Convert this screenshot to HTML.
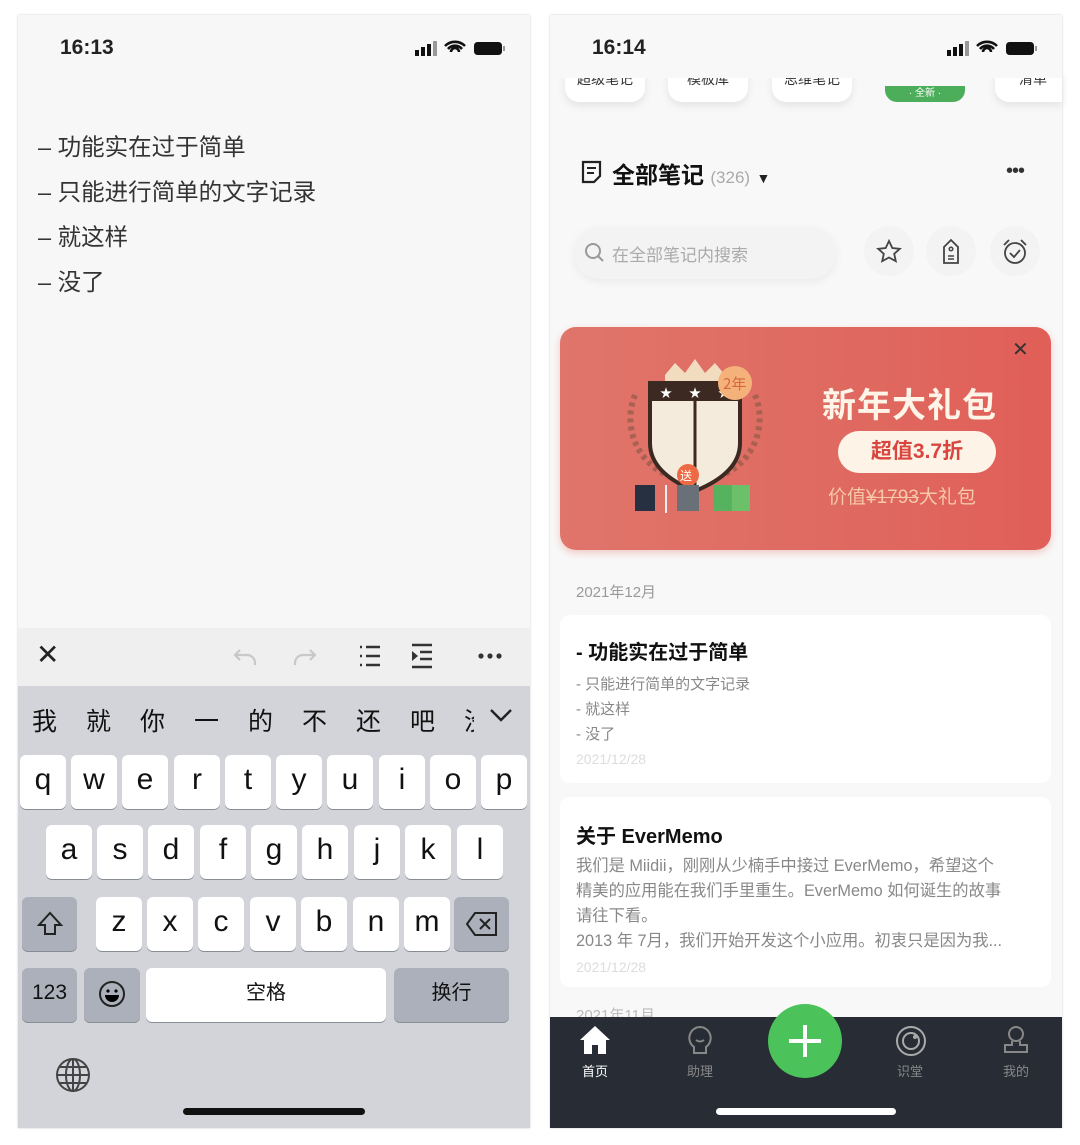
<!DOCTYPE html>
<html><head><meta charset="utf-8"><style>
*{margin:0;padding:0;box-sizing:border-box}
body{width:1080px;height:1145px;background:#fff;position:relative;overflow:hidden;font-family:"Liberation Sans","Noto Sans CJK SC",sans-serif;color:#222}
.a{position:absolute}
.k{position:absolute;background:#fff;border-radius:6px;box-shadow:0 1px 0 #888c93;font-size:30px;text-align:center;color:#111;height:54px;line-height:50px;width:46px}
.g{background:#abb0ba}
</style></head><body>
<!-- LEFT PHONE -->
<div class="a" style="left:18px;top:15px;width:512px;height:1113px;background:#f7f7f7;box-shadow:0 0 2px #ccc"></div>
<div class="a" style="left:60px;top:36px;font-size:21px;font-weight:bold">16:13</div>
<svg class="a" style="left:412px;top:40px" width="96" height="20"><g fill="#111"><rect x="3" y="10" width="4" height="6"/><rect x="9" y="7" width="4" height="9"/><rect x="15" y="4" width="4" height="12"/><rect x="21" y="1" width="4" height="15" fill="#999"/></g><path d="M33 6a14 14 0 0 1 20 0M36 9a9 9 0 0 1 14 0M39 12a4 4 0 0 1 8 0" stroke="#111" stroke-width="2.6" fill="none"/><rect x="62" y="2" width="28" height="13" rx="3.5" fill="#111"/><rect x="91" y="6" width="2" height="5" fill="#999"/></svg>
<div class="a" style="left:38px;top:125px;font-size:23.5px;line-height:45px;color:#333">– 功能实在过于简单<br>– 只能进行简单的文字记录<br>– 就这样<br>– 没了</div>
<div class="a" style="left:18px;top:628px;width:512px;height:58px;background:#efeff0"></div>
<div class="a" style="left:36px;top:638px;font-size:28px;color:#222">✕</div>
<svg class="a" style="left:230px;top:640px" width="290" height="34"><g fill="none" stroke="#c8c8c8" stroke-width="2.2"><path d="M10 10l-5 5 5 5M5 15h12a8 8 0 0 1 8 8v2"/><path d="M80 10l5 5-5 5M85 15H73a8 8 0 0 0-8 8v2"/></g><g stroke="#333" stroke-width="2.4"><path d="M136 7h14M136 16h14M136 25h14"/><path d="M130 7h2M130 16h2M130 25h2"/><path d="M182 5h20M190 12h12M190 19h12M182 27h20"/></g><path d="M182 11l6 5-6 5z" fill="#333"/><g fill="#333"><circle cx="251" cy="16" r="2.6"/><circle cx="260" cy="16" r="2.6"/><circle cx="269" cy="16" r="2.6"/></g></svg>
<div class="a" style="left:18px;top:686px;width:512px;height:442px;background:#d2d4d9"></div>
<div class="a" style="left:32px;top:702px;font-size:25px;color:#111">
<span style="position:absolute;left:0">我</span><span style="position:absolute;left:54px">就</span><span style="position:absolute;left:108px">你</span><span style="position:absolute;left:162px">一</span><span style="position:absolute;left:216px">的</span><span style="position:absolute;left:270px">不</span><span style="position:absolute;left:324px">还</span><span style="position:absolute;left:378px">吧</span><span style="position:absolute;left:432px;width:10px;overflow:hidden">没</span></div>
<svg class="a" style="left:488px;top:706px" width="26" height="18"><path d="M3 4l10 10 10-10" stroke="#222" stroke-width="2.4" fill="none"/></svg>
<div class="k" style="left:20px;top:755px">q</div><div class="k" style="left:71px;top:755px">w</div><div class="k" style="left:122px;top:755px">e</div><div class="k" style="left:174px;top:755px">r</div><div class="k" style="left:225px;top:755px">t</div><div class="k" style="left:276px;top:755px">y</div><div class="k" style="left:327px;top:755px">u</div><div class="k" style="left:379px;top:755px">i</div><div class="k" style="left:430px;top:755px">o</div><div class="k" style="left:481px;top:755px">p</div>
<div class="k" style="left:46px;top:825px">a</div><div class="k" style="left:97px;top:825px">s</div><div class="k" style="left:148px;top:825px">d</div><div class="k" style="left:200px;top:825px">f</div><div class="k" style="left:251px;top:825px">g</div><div class="k" style="left:302px;top:825px">h</div><div class="k" style="left:354px;top:825px">j</div><div class="k" style="left:405px;top:825px">k</div><div class="k" style="left:457px;top:825px">l</div>
<div class="k g" style="left:22px;top:897px;width:55px"><svg width="30" height="30" style="margin-top:12px"><path d="M15 4L4 16h6v9h10v-9h6z" fill="none" stroke="#222" stroke-width="2"/></svg></div>
<div class="k" style="left:96px;top:897px">z</div><div class="k" style="left:147px;top:897px">x</div><div class="k" style="left:198px;top:897px">c</div><div class="k" style="left:250px;top:897px">v</div><div class="k" style="left:301px;top:897px">b</div><div class="k" style="left:353px;top:897px">n</div><div class="k" style="left:404px;top:897px">m</div>
<div class="k g" style="left:454px;top:897px;width:55px"><svg width="34" height="26" style="margin-top:14px"><path d="M10 2h21v22H10L2 13z" fill="none" stroke="#222" stroke-width="2"/><path d="M15 8l10 10M25 8L15 18" stroke="#222" stroke-width="2"/></svg></div>
<div class="k g" style="left:22px;top:968px;width:55px;font-size:21px">123</div>
<div class="k g" style="left:84px;top:968px;width:56px"><svg width="28" height="28" style="margin-top:12px"><circle cx="14" cy="14" r="12" fill="none" stroke="#222" stroke-width="2"/><circle cx="10" cy="11" r="1.6"/><circle cx="18" cy="11" r="1.6"/><path d="M7 15h14a7 7 0 0 1-14 0z"/></svg></div>
<div class="k" style="left:146px;top:968px;width:240px;font-size:20px">空格</div>
<div class="k g" style="left:394px;top:968px;width:115px;font-size:20px">换行</div>
<svg class="a" style="left:54px;top:1056px" width="38" height="38"><g fill="none" stroke="#444" stroke-width="2"><circle cx="19" cy="19" r="16"/><ellipse cx="19" cy="19" rx="7" ry="16"/><path d="M19 3v32M3 19h32M6 11h26M6 27h26"/></g></svg>
<div class="a" style="left:183px;top:1108px;width:182px;height:7px;border-radius:4px;background:#111"></div>

<!-- RIGHT PHONE -->
<div class="a" style="left:550px;top:15px;width:512px;height:1113px;background:#f8f8f8;box-shadow:0 0 2px #ccc"></div>
<div class="a" style="left:565px;top:72px;width:80px;height:30px;background:#fff;border-radius:0 0 14px 14px;box-shadow:0 4px 8px #e4e4e4;font-size:14px;text-align:center;color:#333;line-height:14px;overflow:hidden">超级笔记</div>
<div class="a" style="left:668px;top:72px;width:80px;height:30px;background:#fff;border-radius:0 0 14px 14px;box-shadow:0 4px 8px #e4e4e4;font-size:14px;text-align:center;color:#333;line-height:14px;overflow:hidden">模板库</div>
<div class="a" style="left:772px;top:72px;width:80px;height:30px;background:#fff;border-radius:0 0 14px 14px;box-shadow:0 4px 8px #e4e4e4;font-size:14px;text-align:center;color:#333;line-height:14px;overflow:hidden">思维笔记</div>
<div class="a" style="left:885px;top:86px;width:80px;height:16px;background:#4cae5b;border-radius:0 0 12px 12px;font-size:10px;text-align:center;color:#fff;line-height:16px">· 全新 ·</div>
<div class="a" style="left:995px;top:72px;width:67px;height:30px;background:#fff;border-radius:0 0 0 14px;box-shadow:0 4px 8px #e4e4e4;font-size:14px;color:#333;line-height:14px;padding-left:24px;overflow:hidden">清单</div>
<div class="a" style="left:550px;top:20px;width:512px;height:58px;background:#f8f8f8"></div>
<div class="a" style="left:592px;top:36px;font-size:21px;font-weight:bold">16:14</div>
<svg class="a" style="left:944px;top:40px" width="96" height="20"><g fill="#111"><rect x="3" y="10" width="4" height="6"/><rect x="9" y="7" width="4" height="9"/><rect x="15" y="4" width="4" height="12"/><rect x="21" y="1" width="4" height="15" fill="#999"/></g><path d="M33 6a14 14 0 0 1 20 0M36 9a9 9 0 0 1 14 0M39 12a4 4 0 0 1 8 0" stroke="#111" stroke-width="2.6" fill="none"/><rect x="62" y="2" width="28" height="13" rx="3.5" fill="#111"/><rect x="91" y="6" width="2" height="5" fill="#999"/></svg>
<svg class="a" style="left:580px;top:160px" width="24" height="24"><path d="M3 2h17v14l-6 6H3z" fill="none" stroke="#222" stroke-width="2.2"/><path d="M7 8h9M7 13h7" stroke="#222" stroke-width="2"/></svg>
<div class="a" style="left:612px;top:156px;font-size:23px;font-weight:bold;color:#111">全部笔记 <span style="font-weight:normal;font-size:17px;color:#aaa">(326)</span> <span style="font-size:14px;color:#222">▼</span></div>
<div class="a" style="left:1006px;top:160px;font-size:20px;color:#333;letter-spacing:-1px">•••</div>
<div class="a" style="left:574px;top:227px;width:262px;height:52px;border-radius:26px;background:#f3f3f3;box-shadow:0 3px 8px #eaeaea"></div>
<svg class="a" style="left:584px;top:242px" width="22" height="22"><circle cx="9" cy="9" r="7" fill="none" stroke="#999" stroke-width="2"/><path d="M14 14l5 5" stroke="#999" stroke-width="2"/></svg>
<div class="a" style="left:612px;top:241px;font-size:17px;color:#aaa">在全部笔记内搜索</div>
<div class="a" style="left:864px;top:226px;width:50px;height:50px;border-radius:25px;background:#f3f3f3"></div>
<div class="a" style="left:926px;top:226px;width:50px;height:50px;border-radius:25px;background:#f3f3f3"></div>
<div class="a" style="left:990px;top:226px;width:50px;height:50px;border-radius:25px;background:#f3f3f3"></div>
<svg class="a" style="left:876px;top:239px" width="26" height="26"><path d="M13 2l3.3 7 7.5.8-5.6 5 1.6 7.4L13 18.5 6.2 22.2l1.6-7.4-5.6-5 7.5-.8z" fill="none" stroke="#444" stroke-width="1.8"/></svg>
<svg class="a" style="left:941px;top:238px" width="20" height="28"><path d="M3 9l7-7 7 7v16H3z" fill="none" stroke="#444" stroke-width="1.8"/><circle cx="10" cy="11" r="1.8" fill="none" stroke="#444" stroke-width="1.5"/><path d="M7 18h6M7 21h6" stroke="#444" stroke-width="1.5"/></svg>
<svg class="a" style="left:1002px;top:238px" width="26" height="28"><circle cx="13" cy="15" r="10" fill="none" stroke="#444" stroke-width="1.8"/><path d="M2 7l5-5M24 7l-5-5M8 15l4 4 6-7" fill="none" stroke="#444" stroke-width="1.8"/></svg>
<!-- banner -->
<div class="a" style="left:560px;top:327px;width:491px;height:223px;border-radius:16px;background:linear-gradient(90deg,#e0756b,#df6960 60%,#e05f58);box-shadow:0 3px 8px #f0c8c4"></div>
<div class="a" style="left:1012px;top:337px;font-size:20px;color:#333">✕</div>
<svg class="a" style="left:615px;top:345px" width="160" height="180"><g fill="none" stroke="#9b5d4c" stroke-width="6" stroke-dasharray="4 4" opacity=".8"><path d="M20 50a62 62 0 0 0 50 85M140 50a62 62 0 0 1-50 85"/></g><path d="M50 30l10-12 10 10 10-14 10 14 10-10 10 12v8H50z" fill="#f2dcc0"/><path d="M35 38h90v60q0 30-45 48Q35 128 35 98z" fill="#f4ebdc" stroke="#3c2a22" stroke-width="4"/><rect x="35" y="38" width="90" height="18" fill="#3c2a22"/><g fill="#fff" font-size="12"><text x="45" y="52">★</text><text x="74" y="52">★</text><text x="103" y="52">★</text></g><path d="M80 56v86" stroke="#3c2a22" stroke-width="3"/><circle cx="120" cy="38" r="17" fill="#f4b27a"/><text x="108" y="44" font-size="15" fill="#d6683a" font-family="Noto Sans CJK SC">2年</text><circle cx="73" cy="130" r="11" fill="#ee6a44"/><text x="65" y="135" font-size="12" fill="#fff" font-family="Noto Sans CJK SC">送</text><rect x="20" y="140" width="20" height="26" fill="#273040"/><rect x="50" y="140" width="2" height="28" fill="#eee"/><rect x="62" y="140" width="22" height="26" fill="#6a7078"/><rect x="98" y="140" width="18" height="26" fill="#55b35f"/><rect x="117" y="140" width="18" height="26" fill="#6cc06a"/></svg>
<div class="a" style="left:822px;top:378px;font-size:34px;font-weight:bold;color:#fff4e8;letter-spacing:1px">新年大礼包</div>
<div class="a" style="left:838px;top:431px;width:158px;height:42px;border-radius:21px;background:#fdf3e7;color:#d9463f;font-size:21px;font-weight:bold;text-align:center;line-height:42px">超值3.7折</div>
<div class="a" style="left:828px;top:482px;font-size:19px;color:#f6c8a9">价值<s>¥1793</s>大礼包</div>
<!-- notes -->
<div class="a" style="left:576px;top:581px;font-size:15px;color:#999">2021年12月</div>
<div class="a" style="left:560px;top:615px;width:491px;height:168px;background:#fff;border-radius:10px"></div>
<div class="a" style="left:576px;top:636px;font-size:20px;font-weight:bold;color:#111">- 功能实在过于简单</div>
<div class="a" style="left:576px;top:672px;font-size:15px;line-height:25px;color:#888">- 只能进行简单的文字记录<br>- 就这样<br>- 没了</div>
<div class="a" style="left:576px;top:751px;font-size:14px;color:#ddd">2021/12/28</div>
<div class="a" style="left:560px;top:797px;width:491px;height:190px;background:#fff;border-radius:10px"></div>
<div class="a" style="left:576px;top:820px;font-size:20px;font-weight:bold;color:#111">关于 EverMemo</div>
<div class="a" style="left:576px;top:854px;font-size:16.3px;line-height:25px;color:#888;white-space:nowrap">我们是 Miidii，刚刚从少楠手中接过 EverMemo，希望这个<br>精美的应用能在我们手里重生。EverMemo 如何诞生的故事<br>请往下看。<br>2013 年 7月，我们开始开发这个小应用。初衷只是因为我...</div>
<div class="a" style="left:576px;top:959px;font-size:14px;color:#ddd">2021/12/28</div>
<div class="a" style="left:576px;top:1004px;font-size:15px;color:#bbb">2021年11月</div>
<!-- tab bar -->
<div class="a" style="left:550px;top:1017px;width:512px;height:111px;background:#282c34"></div>
<svg class="a" style="left:579px;top:1024px" width="32" height="32"><path d="M16 2L1 16h4v14h8v-9h6v9h8V16h4z" fill="#fff"/></svg>
<div class="a" style="left:582px;top:1061px;font-size:13px;color:#fff">首页</div>
<svg class="a" style="left:684px;top:1024px" width="32" height="34"><path d="M16 3a11 11 0 0 0-6 20v6h12v-6A11 11 0 0 0 16 3z" fill="none" stroke="#888" stroke-width="2"/><path d="M12 16q4 3 8 0" stroke="#888" stroke-width="2" fill="none"/></svg>
<div class="a" style="left:687px;top:1061px;font-size:13px;color:#888">助理</div>
<div class="a" style="left:768px;top:1004px;width:74px;height:74px;border-radius:37px;background:#4bc25a"></div>
<div class="a" style="left:789px;top:1039px;width:32px;height:4px;background:#fff"></div>
<div class="a" style="left:803px;top:1025px;width:4px;height:32px;background:#fff"></div>
<svg class="a" style="left:894px;top:1024px" width="34" height="34"><circle cx="17" cy="17" r="14" fill="none" stroke="#aaa" stroke-width="2"/><circle cx="17" cy="17" r="8" fill="none" stroke="#aaa" stroke-width="2"/><circle cx="21" cy="13" r="2" fill="#aaa"/></svg>
<div class="a" style="left:897px;top:1061px;font-size:13px;color:#888">识堂</div>
<svg class="a" style="left:1002px;top:1024px" width="28" height="32"><circle cx="14" cy="10" r="7" fill="none" stroke="#888" stroke-width="2"/><path d="M10 17v4H3v7h22v-7h-7v-4" fill="none" stroke="#888" stroke-width="2"/></svg>
<div class="a" style="left:1003px;top:1061px;font-size:13px;color:#888">我的</div>
<div class="a" style="left:716px;top:1108px;width:180px;height:7px;border-radius:4px;background:#fff"></div>
</body></html>
